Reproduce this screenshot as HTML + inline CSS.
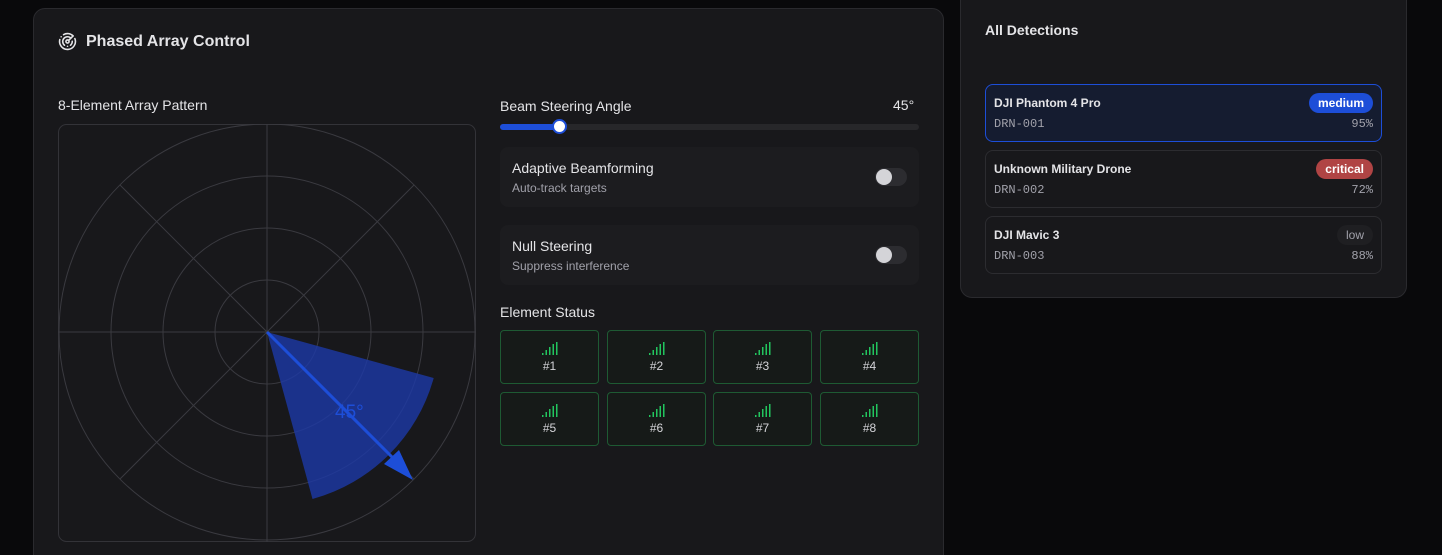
<!DOCTYPE html>
<html style="width:1442px;height:555px;overflow:hidden"><head><meta charset="utf-8"><style>
*{box-sizing:border-box;margin:0;padding:0}
body{width:1442px;height:555px;background:#09090b;font-family:"Liberation Sans",sans-serif;color:#e4e4e7;position:relative;overflow:hidden}
.p1{position:absolute;left:33px;top:8px;width:911px;height:560px;background:#18181b;border:1px solid #2a2a2e;border-radius:12px}
.p2{position:absolute;left:960px;top:-12px;width:447px;height:310px;background:#18181b;border:1px solid #2a2a2e;border-radius:12px}
.abs{position:absolute}
.t{font-size:15px;color:#e4e4e7}
.row{position:absolute;left:500px;width:419px;background:#1c1c1f;border-radius:8px}
.tog{position:absolute;right:12px;width:32px;height:18px;border-radius:9px;background:#2c2c30}
.tog:after{content:"";position:absolute;left:1px;top:1px;width:16px;height:16px;border-radius:50%;background:#d4d4d8}
.el{position:absolute;width:99px;height:54px;border:1px solid #1e5a33;border-radius:4px;background:#161a18;text-align:center;font-size:12px;color:#d4d4d8}
.el svg{display:block;margin:11px auto 4px}
.card{position:absolute;left:985px;width:397px;height:58px;border:1px solid #2c2c30;border-radius:8px;background:#18181b}
.card .n{position:absolute;left:8px;top:11px;font-size:12px;font-weight:bold;color:#e4e4e7}
.card .id{position:absolute;left:8px;top:32px;font-size:12px;font-family:"Liberation Mono",monospace;color:#a1a1aa}
.card .pc{position:absolute;right:8px;top:32px;font-size:12px;color:#a1a1aa;font-family:"Liberation Mono",monospace}
.card .b{position:absolute;right:8px;top:8px;height:20px;padding:0 9px;border-radius:10px;font-size:12px;line-height:20px;font-weight:bold}
</style></head><body>
<div class="p1"></div>
<div class="p2"></div>
<svg class="abs" style="left:58px;top:32px" width="19" height="19" viewBox="0 0 24 24" fill="none" stroke="#e4e4e7" stroke-width="2" stroke-linecap="round"><path d="M19.07 4.93A10 10 0 0 0 6.99 3.34"/><path d="M4 6h.01"/><path d="M2.29 9.62A10 10 0 1 0 21.31 8.35"/><path d="M16.24 7.76A6 6 0 1 0 8.23 16.67"/><path d="M12 18h.01"/><path d="M17.99 11.66A6 6 0 0 1 15.77 16.67"/><circle cx="12" cy="12" r="2"/><path d="m13.41 10.59 5.66-5.66"/></svg>
<div class="abs" style="left:86px;top:33px;font-size:16px;font-weight:bold;color:#e4e4e7">Phased Array Control</div>
<div class="abs t" style="left:58px;top:97px;font-size:14px">8-Element Array Pattern</div>
<svg class="abs" style="left:58px;top:124px" width="418" height="418">
<rect x="0.5" y="0.5" width="417" height="417" rx="8" fill="#18181b" stroke="#333338"/>
<g fill="none" stroke="#3a3a40" stroke-width="1">
<circle cx="209" cy="208" r="52"/><circle cx="209" cy="208" r="104"/><circle cx="209" cy="208" r="156"/><circle cx="209" cy="208" r="208"/>
<line x1="209" y1="0" x2="209" y2="418"/><line x1="0" y1="208" x2="418" y2="208"/>
<line x1="62" y1="61" x2="356" y2="355"/><line x1="356" y1="61" x2="62" y2="355"/>
</g>
<path d="M209 208 L375.7 254 A173 173 0 0 1 254.5 375 Z" fill="#1d3aa8" fill-opacity="0.8"/>
<line x1="209" y1="208" x2="340" y2="339" stroke="#1d4ed8" stroke-width="3"/>
<path d="M355 356 L326 340 L341 326 Z" fill="#1d4ed8"/>
<text x="277" y="294" font-size="19" fill="#1d4ed8" font-family="Liberation Sans">45°</text>
</svg>
<div class="abs t" style="left:500px;top:98px;font-size:14px">Beam Steering Angle</div>
<div class="abs t" style="left:893px;top:97px;font-size:14px">45°</div>
<div class="abs" style="left:500px;top:124px;width:419px;height:6px;border-radius:3px;background:#27272a"></div>
<div class="abs" style="left:500px;top:124px;width:60px;height:6px;border-radius:3px;background:#1d4ed8"></div>
<div class="abs" style="left:552px;top:119px;width:15px;height:15px;border-radius:50%;background:#fff;border:2px solid #1d4ed8"></div>
<div class="row" style="top:147px;height:60px"><div class="abs" style="left:12px;top:13px;font-size:14px">Adaptive Beamforming</div><div class="abs" style="left:12px;top:34px;font-size:12px;color:#a1a1aa">Auto-track targets</div><div class="tog" style="top:21px"></div></div>
<div class="row" style="top:225px;height:60px"><div class="abs" style="left:12px;top:13px;font-size:14px">Null Steering</div><div class="abs" style="left:12px;top:34px;font-size:12px;color:#a1a1aa">Suppress interference</div><div class="tog" style="top:21px"></div></div>
<div class="abs t" style="left:500px;top:304px;font-size:14px">Element Status</div>
<div class="el" style="left:500px;top:330px"><svg width="16" height="13" viewBox="0 0 16 13" fill="#22c55e"><rect x="0" y="11" width="1.5" height="2"/><rect x="3.5" y="8" width="1.5" height="5"/><rect x="7" y="5" width="1.5" height="8"/><rect x="10.5" y="2" width="1.5" height="11"/><rect x="14" y="0" width="1.5" height="13"/></svg>#1</div>
<div class="el" style="left:607px;top:330px"><svg width="16" height="13" viewBox="0 0 16 13" fill="#22c55e"><rect x="0" y="11" width="1.5" height="2"/><rect x="3.5" y="8" width="1.5" height="5"/><rect x="7" y="5" width="1.5" height="8"/><rect x="10.5" y="2" width="1.5" height="11"/><rect x="14" y="0" width="1.5" height="13"/></svg>#2</div>
<div class="el" style="left:713px;top:330px"><svg width="16" height="13" viewBox="0 0 16 13" fill="#22c55e"><rect x="0" y="11" width="1.5" height="2"/><rect x="3.5" y="8" width="1.5" height="5"/><rect x="7" y="5" width="1.5" height="8"/><rect x="10.5" y="2" width="1.5" height="11"/><rect x="14" y="0" width="1.5" height="13"/></svg>#3</div>
<div class="el" style="left:820px;top:330px"><svg width="16" height="13" viewBox="0 0 16 13" fill="#22c55e"><rect x="0" y="11" width="1.5" height="2"/><rect x="3.5" y="8" width="1.5" height="5"/><rect x="7" y="5" width="1.5" height="8"/><rect x="10.5" y="2" width="1.5" height="11"/><rect x="14" y="0" width="1.5" height="13"/></svg>#4</div>
<div class="el" style="left:500px;top:392px"><svg width="16" height="13" viewBox="0 0 16 13" fill="#22c55e"><rect x="0" y="11" width="1.5" height="2"/><rect x="3.5" y="8" width="1.5" height="5"/><rect x="7" y="5" width="1.5" height="8"/><rect x="10.5" y="2" width="1.5" height="11"/><rect x="14" y="0" width="1.5" height="13"/></svg>#5</div>
<div class="el" style="left:607px;top:392px"><svg width="16" height="13" viewBox="0 0 16 13" fill="#22c55e"><rect x="0" y="11" width="1.5" height="2"/><rect x="3.5" y="8" width="1.5" height="5"/><rect x="7" y="5" width="1.5" height="8"/><rect x="10.5" y="2" width="1.5" height="11"/><rect x="14" y="0" width="1.5" height="13"/></svg>#6</div>
<div class="el" style="left:713px;top:392px"><svg width="16" height="13" viewBox="0 0 16 13" fill="#22c55e"><rect x="0" y="11" width="1.5" height="2"/><rect x="3.5" y="8" width="1.5" height="5"/><rect x="7" y="5" width="1.5" height="8"/><rect x="10.5" y="2" width="1.5" height="11"/><rect x="14" y="0" width="1.5" height="13"/></svg>#7</div>
<div class="el" style="left:820px;top:392px"><svg width="16" height="13" viewBox="0 0 16 13" fill="#22c55e"><rect x="0" y="11" width="1.5" height="2"/><rect x="3.5" y="8" width="1.5" height="5"/><rect x="7" y="5" width="1.5" height="8"/><rect x="10.5" y="2" width="1.5" height="11"/><rect x="14" y="0" width="1.5" height="13"/></svg>#8</div>

<div class="abs" style="left:985px;top:22px;font-size:14px;font-weight:bold;color:#e4e4e7">All Detections</div>
<div class="card" style="top:84px;border-color:#1d4ed8;background:#151c30"><div class="n">DJI Phantom 4 Pro</div><div class="b" style="background:#1d4ed8;color:#fff">medium</div><div class="id">DRN-001</div><div class="pc">95%</div></div>
<div class="card" style="top:150px"><div class="n">Unknown Military Drone</div><div class="b" style="background:#b04444;color:#fff">critical</div><div class="id">DRN-002</div><div class="pc">72%</div></div>
<div class="card" style="top:216px"><div class="n">DJI Mavic 3</div><div class="b" style="background:#1f1f22;color:#a1a1aa;font-weight:normal">low</div><div class="id">DRN-003</div><div class="pc">88%</div></div>
</body></html>
